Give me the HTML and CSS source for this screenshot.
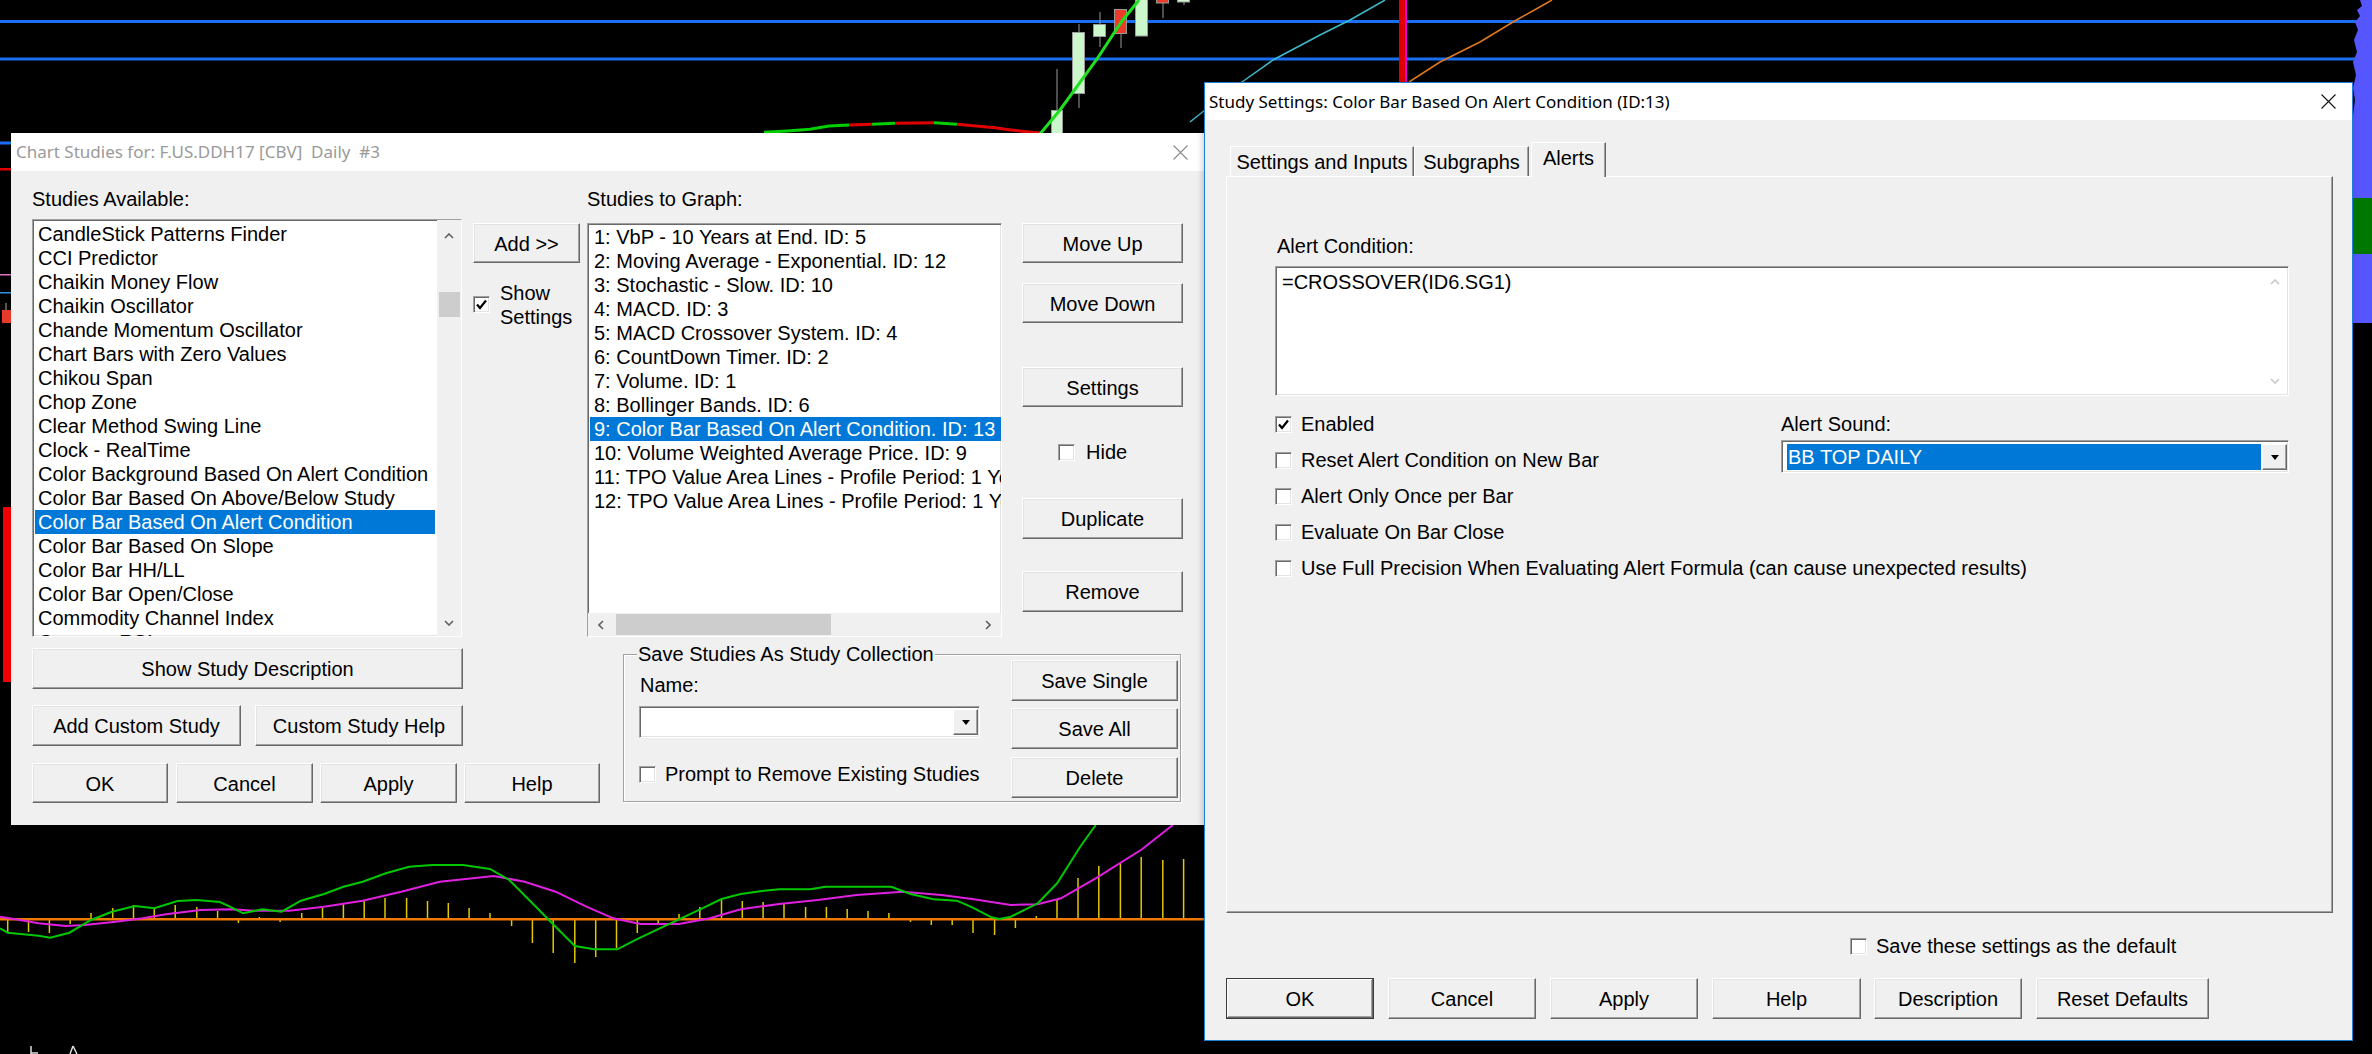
FILE: index.html
```html
<!DOCTYPE html>
<html>
<head>
<meta charset="utf-8">
<title>Chart Studies</title>
<link rel="stylesheet" href="styles.css">
</head>
<body>
<div class="desktop">
  <svg class="chart" width="2372" height="1054" viewBox="0 0 2372 1054">
    <rect width="2372" height="1054" fill="#000"/>
    <rect x="0" y="20" width="2362" height="3" fill="#1a6ef2"/>
    <rect x="0" y="57.5" width="2362" height="3" fill="#1a6ef2"/>
    <rect x="0" y="141.5" width="14" height="3" fill="#1a6ef2"/>
    <!-- left edge pieces -->
    <rect x="0" y="168" width="11" height="2.5" fill="#e00000"/>
    <rect x="0" y="274" width="11" height="1.5" fill="#e070c0"/>
    <rect x="0" y="292" width="11" height="1.5" fill="#3090e0"/>
    <line x1="6" y1="303" x2="6" y2="310" stroke="#aaa"/>
    <rect x="2" y="310" width="9" height="13" fill="#e83a2a"/>
    <rect x="3" y="507" width="8" height="175" fill="#f00000"/>
    <!-- colored MA -->
    <g fill="none" stroke-width="3">
      <polyline stroke="#00d000" points="764,132.3 787,131 810,129.3 829,126 849,125"/>
      <polyline stroke="#e00000" points="849,125 872,124.3"/>
      <polyline stroke="#00d000" points="872,124.3 895,123.3"/>
      <polyline stroke="#e00000" points="895,123.3 934,122.7"/>
      <polyline stroke="#00d000" points="934,122.7 957,124.3"/>
      <polyline stroke="#e00000" points="957,124.3 976,126 995,127.7 1011,130 1026,131.7 1040,133"/>
    </g>
    <!-- candles -->
    <g stroke="#9a9a9a" stroke-width="1">
      <line x1="1057" y1="69" x2="1057" y2="133"/>
      <rect x="1051.5" y="110.5" width="11" height="25" fill="#ccf7cc"/>
      <line x1="1079" y1="24" x2="1079" y2="108"/>
      <rect x="1072.5" y="32.5" width="12" height="61" fill="#ccf7cc"/>
      <line x1="1100" y1="12" x2="1100" y2="47"/>
      <rect x="1093.5" y="24.5" width="12" height="12" fill="#ccf7cc"/>
      <line x1="1121" y1="9" x2="1121" y2="48"/>
      <rect x="1114.5" y="9.5" width="12" height="24" fill="#ee3a28"/>
      <rect x="1135.5" y="-1" width="12" height="37" fill="#ccf7cc"/>
      <line x1="1163" y1="0" x2="1163" y2="18"/>
      <rect x="1156.5" y="-1" width="12" height="4" fill="#ee3a28"/>
      <line x1="1184" y1="0" x2="1184" y2="5"/>
      <rect x="1177.5" y="-1" width="12" height="3" fill="#ccf7cc"/>
    </g>
    <polyline fill="none" stroke="#1ee01e" stroke-width="3" points="1040,134 1060,110 1097,59 1122,21 1139,0"/>
    <!-- top right -->
    <polyline fill="none" stroke="#40b8c8" stroke-width="1.5" points="1190,122 1215,102 1242,82 1273,60 1320,35 1350,20 1385,0"/>
    <rect x="1399" y="0" width="6" height="84" fill="#e00000"/>
    <rect x="1405" y="0" width="2" height="84" fill="#e000e0"/>
    <polyline fill="none" stroke="#e07820" stroke-width="1.5" points="1409,82 1440,62 1480,42 1513,22 1545,4 1552,0"/>
    <!-- right edge -->
    <polygon fill="#5656ff" points="2372,0 2360,0 2362,6 2357,10 2360,16 2355,22 2358,30 2354,40 2357,52 2353,62 2356,75 2353,88 2355,100 2353,115 2353,323 2372,323"/>
    <rect x="2353" y="198" width="19" height="56" fill="#007800"/>
    <!-- lower chart -->
    <path fill="none" stroke="#e0c800" stroke-width="1.5" d="M7.7 919V933M28.5 919V932M49.4 919V933M70.2 919V924M91 919V913M112.7 919V908M133.5 919V905M154.3 919V909M175.2 919V905M196.8 919V907M217.6 919V911M238.4 919V923M259.3 919V917M280.1 919V922M301.7 919V913M322.5 919V908M343.4 919V903M364.2 919V901M385 919V898M406.6 919V898M427.5 919V901M448.3 919V903M469.1 919V908M490 919V913M511.6 919V926M532.4 919V943M553.2 919V953M574.8 919V963M595.7 919V957M616.5 919V948M637.3 919V933M658.2 919V923M679 919V914M699.8 919V907M721.5 919V900M742.3 919V901M763.1 919V902M784 919V904M805.6 919V907M826.4 919V907M847.2 919V909M868 919V911M888.9 919V913M910.5 919V922M931.3 919V925M952.2 919V925M973 919V933M994.6 919V935M1015.4 919V928M1036.3 919V916M1057 919V900M1078 919V878M1098.8 919V866M1120.4 919V863M1141.2 919V857M1162.8 919V860M1183.6 919V859"/>
    <rect x="0" y="918" width="1210" height="2.5" fill="#f07800"/>
    <polyline fill="none" stroke="#e020e0" stroke-width="2" points="0,916.7 15.4,919.3 38.6,923.3 65.6,926 84.9,925 115.7,921.7 142.7,918.3 165.9,914.3 200.6,910 231.5,909.3 254.6,910.7 289.4,910.7 324,906.7 362.7,900.7 401.2,891.7 439.8,881.7 493.8,876 524.7,881.7 555.6,891.7 586.4,906.7 613.4,918.3 640.4,924 679,924 709.9,918.3 740.7,909.3 779.3,904 817.9,900 856.5,895 902.8,891.7 941.4,895 972.2,899 1010.8,905 1037.8,904.3 1061,898.3 1095.7,878.3 1142,849.3 1172.8,825"/>
    <polyline fill="none" stroke="#00c800" stroke-width="2" points="0,928.3 7.7,932.7 23.1,934.3 38.6,935.7 50.2,937.7 69.4,932.7 91,920 111.9,911.7 135,906 154.3,908.3 177.5,901 196.8,900 219.9,902 231.5,907.3 243,913.3 262.3,909.3 281.6,911.7 300.9,900.7 324,894 343.4,886.7 362.7,881.7 385.8,873.3 409,866.7 432,865 463,865 490,869 509.3,880 532.4,903.3 555.6,926.7 574.8,946 594.1,949.3 617.3,949.3 636.6,939.3 659.7,928.3 679,919.3 702.2,908.3 721.5,899 740.7,894 763.9,890.7 779.3,889.3 810.2,889.3 825.6,886.7 891.2,886.7 910.5,894 933.6,899.3 956.8,900.7 972.2,907.3 991.5,917.3 999.2,919 1010.8,916.7 1037.8,903.3 1057.1,883.3 1080.2,846.7 1095.7,825"/>
    <g stroke="#ddd" stroke-width="1.5" fill="none">
      <path d="M31 1046V1054M31 1053H38"/>
      <path d="M70 1054L73 1046M73 1046L77 1054"/>
    </g>
  </svg>

  <!-- Chart Studies window -->
  <div class="win win-studies">
    <div class="titlebar">
      <span class="ttext">Chart Studies for: F.US.DDH17 [CBV]&nbsp; Daily&nbsp; #3</span>
      <svg class="close" viewBox="0 0 15 15"><path d="M0.5 0.5L14.5 14.5M14.5 0.5L0.5 14.5" stroke="#8a8a8a" stroke-width="1.1" fill="none"/></svg>
    </div>
    <div class="sbody">
      <div class="toprow">
        <div class="col-avail">
          <div class="lbl">Studies Available:</div>
          <div class="listbox lb-avail">
            <div class="items">
              <div class="row">CandleStick Patterns Finder</div>
              <div class="row">CCI Predictor</div>
              <div class="row">Chaikin Money Flow</div>
              <div class="row">Chaikin Oscillator</div>
              <div class="row">Chande Momentum Oscillator</div>
              <div class="row">Chart Bars with Zero Values</div>
              <div class="row">Chikou Span</div>
              <div class="row">Chop Zone</div>
              <div class="row">Clear Method Swing Line</div>
              <div class="row">Clock - RealTime</div>
              <div class="row">Color Background Based On Alert Condition</div>
              <div class="row">Color Bar Based On Above/Below Study</div>
              <div class="row sel">Color Bar Based On Alert Condition</div>
              <div class="row">Color Bar Based On Slope</div>
              <div class="row">Color Bar HH/LL</div>
              <div class="row">Color Bar Open/Close</div>
              <div class="row">Commodity Channel Index</div>
              <div class="row">Connors RSI</div>
            </div>
            <div class="vscroll">
              <div class="sb-up"><svg class="chev" viewBox="0 0 10 6"><polyline points="1,5 5,1 9,5"/></svg></div>
              <div class="vthumb"></div>
              <div class="sb-fill"></div>
              <div class="sb-down"><svg class="chev" viewBox="0 0 10 6"><polyline points="1,1 5,5 9,1"/></svg></div>
            </div>
          </div>
        </div>
        <div class="col-mid">
          <div class="btn btn-add">Add &gt;&gt;</div>
          <div class="showset">
            <span class="cb checked"><svg viewBox="0 0 15 15"><polyline points="3,7.5 6,11 12,3.5"/></svg></span>
            <span class="txt">Show<br>Settings</span>
          </div>
        </div>
        <div class="col-graph">
          <div class="lbl">Studies to Graph:</div>
          <div class="listbox lb-graph">
            <div class="items">
              <div class="row">1: VbP - 10 Years at End. ID: 5</div>
              <div class="row">2: Moving Average - Exponential. ID: 12</div>
              <div class="row">3: Stochastic - Slow. ID: 10</div>
              <div class="row">4: MACD. ID: 3</div>
              <div class="row">5: MACD Crossover System. ID: 4</div>
              <div class="row">6: CountDown Timer. ID: 2</div>
              <div class="row">7: Volume. ID: 1</div>
              <div class="row">8: Bollinger Bands. ID: 6</div>
              <div class="row sel">9: Color Bar Based On Alert Condition. ID: 13</div>
              <div class="row">10: Volume Weighted Average Price. ID: 9</div>
              <div class="row">11: TPO Value Area Lines - Profile Period: 1 Year</div>
              <div class="row">12: TPO Value Area Lines - Profile Period: 1 Year</div>
            </div>
            <div class="hscroll">
              <div class="sb-left"><svg class="chev-h" viewBox="0 0 6 10"><polyline points="5,1 1,5 5,9"/></svg></div>
              <div class="hthumb"></div>
              <div class="sb-fill"></div>
              <div class="sb-right"><svg class="chev-h" viewBox="0 0 6 10"><polyline points="1,1 5,5 1,9"/></svg></div>
            </div>
          </div>
        </div>
        <div class="col-btns">
          <div class="btn b-up">Move Up</div>
          <div class="btn b-down">Move Down</div>
          <div class="btn b-set">Settings</div>
          <div class="hide-row"><span class="cb"></span><span class="txt">Hide</span></div>
          <div class="btn b-dup">Duplicate</div>
          <div class="btn b-rem">Remove</div>
        </div>
      </div>
      <div class="botrow">
        <div class="botleft">
          <div class="btn btn-desc">Show Study Description</div>
          <div class="brow brow1">
            <div class="btn w209">Add Custom Study</div>
            <div class="btn w208">Custom Study Help</div>
          </div>
          <div class="brow brow2">
            <div class="btn w136">OK</div>
            <div class="btn w137 ml8">Cancel</div>
            <div class="btn w137 ml7">Apply</div>
            <div class="btn w136 ml7">Help</div>
          </div>
        </div>
        <div class="group">
          <span class="legend">Save Studies As Study Collection</span>
          <div class="g-left">
            <div class="lbl g-name">Name:</div>
            <div class="combo g-combo">
              <span class="val"></span>
              <span class="drop"><svg viewBox="0 0 8 5"><polygon points="0,0 8,0 4,5"/></svg></span>
            </div>
            <div class="g-prompt"><span class="cb"></span><span class="txt">Prompt to Remove Existing Studies</span></div>
          </div>
          <div class="g-right">
            <div class="btn g-b1">Save Single</div>
            <div class="btn g-b2">Save All</div>
            <div class="btn g-b3">Delete</div>
          </div>
        </div>
      </div>
    </div>
  </div>

  <!-- Study Settings window -->
  <div class="win win-settings">
    <div class="titlebar">
      <span class="ttext">Study Settings: Color Bar Based On Alert Condition (ID:13)</span>
      <svg class="close" viewBox="0 0 15 15"><path d="M0.5 0.5L14.5 14.5M14.5 0.5L0.5 14.5" stroke="#111" stroke-width="1.1" fill="none"/></svg>
    </div>
    <div class="tbody">
      <div class="tabs">
        <div class="tab t1">Settings and Inputs</div>
        <div class="tab t2">Subgraphs</div>
        <div class="tab t3 active">Alerts</div>
      </div>
      <div class="panel">
        <div class="lbl p-lbl">Alert Condition:</div>
        <div class="tarea">
          <div class="tval">=CROSSOVER(ID6.SG1)</div>
          <div class="tscroll">
            <svg class="chev faint" viewBox="0 0 10 6"><polyline points="1,5 5,1 9,5"/></svg>
            <svg class="chev faint" viewBox="0 0 10 6"><polyline points="1,1 5,5 9,1"/></svg>
          </div>
        </div>
        <div class="opts">
          <div class="opt-col">
            <div class="opt"><span class="cb checked"><svg viewBox="0 0 15 15"><polyline points="3,7.5 6,11 12,3.5"/></svg></span><span class="txt">Enabled</span></div>
            <div class="opt"><span class="cb"></span><span class="txt">Reset Alert Condition on New Bar</span></div>
            <div class="opt"><span class="cb"></span><span class="txt">Alert Only Once per Bar</span></div>
            <div class="opt"><span class="cb"></span><span class="txt">Evaluate On Bar Close</span></div>
            <div class="opt"><span class="cb"></span><span class="txt">Use Full Precision When Evaluating Alert Formula (can cause unexpected results)</span></div>
          </div>
          <div class="snd-col">
            <div class="lbl">Alert Sound:</div>
            <div class="combo snd-combo">
              <span class="val selval">BB TOP DAILY</span>
              <span class="drop"><svg viewBox="0 0 8 5"><polygon points="0,0 8,0 4,5"/></svg></span>
            </div>
          </div>
        </div>
      </div>
      <div class="save-def"><span class="cb"></span><span class="txt">Save these settings as the default</span></div>
      <div class="dlg-btns">
        <div class="btn defbtn w148">OK</div>
        <div class="btn w148 ml14">Cancel</div>
        <div class="btn w148 ml14">Apply</div>
        <div class="btn w149 ml14">Help</div>
        <div class="btn w148 ml13">Description</div>
        <div class="btn w173 ml14">Reset Defaults</div>
      </div>
    </div>
  </div>
</div>
</body>
</html>
```
FILE: styles.css
```css
* { box-sizing: border-box; }
html, body { margin: 0; padding: 0; background: #000; }
body { width: 2372px; height: 1054px; overflow: hidden; }

.desktop {
  position: relative;
  width: 2372px;
  height: 1054px;
  overflow: hidden;
  font-family: "Liberation Sans", Arial, sans-serif;
  font-size: 20px;
  line-height: 24px;
  color: #000;
}
.chart { position: absolute; left: 0; top: 0; display: block; }

/* windows */
.win { position: absolute; background: #f0f0f0; display: flex; flex-direction: column; }
.win-studies { left: 11px; top: 133px; width: 1193px; height: 692px; }
.win-settings {
  left: 1204px; top: 82px; width: 1149px; height: 959px;
  border: 1px solid #1b7fd6;
  box-shadow: -2px 0 6px rgba(0,0,0,0.18);
}
.titlebar {
  flex: none;
  height: 38px;
  background: #fff;
  display: flex;
  align-items: center;
  justify-content: space-between;
  font-family: "Noto Sans", "Open Sans", sans-serif;
  font-size: 17px;
  white-space: nowrap;
}
.win-studies .titlebar { padding: 0 16px 0 5px; color: #9a9a9a; }
.win-settings .titlebar { height: 37px; padding: 0 16px 0 4px; color: #000; }
.close { width: 15px; height: 15px; display: block; flex: none; }

/* common controls */
.lbl { height: 24px; white-space: nowrap; }
.txt { white-space: nowrap; }
.btn {
  display: flex;
  align-items: center;
  justify-content: center;
  background: #f0f0f0;
  border: 1px solid;
  border-color: #ffffff #696969 #696969 #ffffff;
  box-shadow: inset -1px -1px 0 #a0a0a0, inset 1px 1px 0 #e3e3e3;
  white-space: nowrap;
  flex: none;
  padding-top: 1px;
}
.defbtn { border-color: #3c3c3c; box-shadow: inset -1px -1px 0 #696969, inset 1px 1px 0 #fff, inset -2px -2px 0 #a0a0a0; }
.cb {
  display: inline-block;
  flex: none;
  width: 17px;
  height: 17px;
  background: #fff;
  border: 1px solid;
  border-color: #a0a0a0 #fff #fff #a0a0a0;
  box-shadow: inset 1px 1px 0 #696969, inset -1px -1px 0 #e3e3e3;
  position: relative;
}
.cb svg { display: block; width: 15px; height: 15px; }
.cb svg polyline { fill: none; stroke: #000; stroke-width: 2.2; }
.sunken {
  border: 1px solid;
}
.listbox, .combo, .tarea {
  background: #fff;
  border: 1px solid;
  border-color: #a0a0a0 #fff #fff #a0a0a0;
  box-shadow: inset 1px 1px 0 #696969, inset -1px -1px 0 #e3e3e3;
}
.listbox { display: flex; overflow: hidden; }
.items { flex: 1; min-width: 0; overflow: hidden; }
.row { height: 24px; white-space: nowrap; overflow: hidden; }
.row.sel { background: #0078d7; color: #fff; }
.chev { width: 10px; height: 6px; display: block; }
.chev polyline, .chev-h polyline { fill: none; stroke: #606060; stroke-width: 1.6; }
.chev-h { width: 6px; height: 10px; display: block; }
.chev.faint polyline { stroke: #c8c8c8; }

/* chart studies window */
.sbody { padding-left: 21px; display: flex; flex-direction: column; }
.toprow { display: flex; align-items: flex-start; margin-top: 16px; }
.col-avail { width: 430px; flex: none; }
.lb-avail { margin-top: 8px; height: 418px; }
.lb-avail .items { padding: 2px 2px 0 2px; }
.lb-avail .row { padding-left: 3px; }
.vscroll { width: 24px; flex: none; background: #f0f0f0; display: flex; flex-direction: column; align-items: center; }
.sb-up { height: 32px; display: flex; align-items: center; justify-content: center; width: 100%; }
.sb-down { height: 26px; display: flex; align-items: center; justify-content: center; width: 100%; }
.vthumb { margin-top: 40px; width: 21px; height: 25px; background: #cdcdcd; }
.sb-fill { flex: 1; }

.col-mid { margin-left: 11px; width: 107px; flex: none; }
.btn-add { margin-top: 36px; height: 40px; width: 107px; }
.showset { margin-top: 18px; display: flex; align-items: flex-start; }
.showset .cb { margin-top: 15px; }
.showset .txt { margin-left: 10px; }

.col-graph { margin-left: 7px; width: 415px; flex: none; }
.lb-graph { margin-top: 12px; height: 414px; flex-direction: column; }
.lb-graph .items { padding: 1px 0 0 2px; }
.lb-graph .row { padding-left: 4px; }
.hscroll { height: 23px; flex: none; background: #f0f0f0; display: flex; align-items: center; }
.sb-left, .sb-right { width: 26px; height: 23px; display: flex; align-items: center; justify-content: center; }
.hthumb { margin-left: 2px; width: 215px; height: 21px; background: #cdcdcd; }

.col-btns { margin-left: 20px; width: 161px; flex: none; display: flex; flex-direction: column; }
.col-btns .btn { width: 161px; }
.b-up { margin-top: 36px; height: 40px; }
.b-down { margin-top: 20px; height: 40px; }
.b-set { margin-top: 44px; height: 40px; }
.hide-row { margin-top: 33px; height: 24px; padding-left: 36px; display: flex; align-items: center; }
.hide-row .txt { margin-left: 11px; }
.b-dup { margin-top: 34px; height: 41px; }
.b-rem { margin-top: 32px; height: 41px; }

.botrow { display: flex; align-items: flex-start; margin-top: 11px; }
.botleft { width: 568px; flex: none; display: flex; flex-direction: column; }
.btn-desc { width: 431px; height: 41px; }
.brow { display: flex; }
.brow1 { margin-top: 16px; }
.brow1 .btn { height: 41px; }
.brow1 .w208 { margin-left: 14px; }
.brow2 { margin-top: 17px; }
.brow2 .btn { height: 40px; }
.w136 { width: 136px; } .w137 { width: 137px; } .w148 { width: 148px; } .w149 { width: 149px; }
.w173 { width: 173px; } .w208 { width: 208px; } .w209 { width: 209px; }
.ml7 { margin-left: 7px; } .ml8 { margin-left: 8px; } .ml13 { margin-left: 13px; } .ml14 { margin-left: 14px; }

.group {
  position: relative;
  margin-left: 23px;
  margin-top: 6px;
  width: 558px;
  height: 148px;
  border: 1px solid #a0a0a0;
  box-shadow: inset 1px 1px 0 #fff, 1px 1px 0 #fff;
  display: flex;
  align-items: flex-start;
}
.legend { position: absolute; left: 13px; top: -13px; background: #f0f0f0; padding: 0 1px; line-height: 24px; white-space: nowrap; }
.g-left { margin-left: 15px; width: 341px; flex: none; display: flex; flex-direction: column; }
.g-name { margin-top: 18px; padding-left: 1px; }
.combo { display: flex; padding: 2px 1px 2px 2px; }
.combo .val { flex: 1; min-width: 0; }
.combo .drop {
  width: 25px; flex: none;
  display: flex; align-items: center; justify-content: center;
  background: #f0f0f0;
  border: 1px solid;
  border-color: #fff #696969 #696969 #fff;
  box-shadow: inset -1px -1px 0 #a0a0a0;
}
.combo .drop svg { width: 8px; height: 5px; display: block; }
.g-combo { margin-top: 9px; height: 32px; }
.g-prompt { margin-top: 24px; height: 24px; display: flex; align-items: center; }
.g-prompt .txt { margin-left: 9px; }
.g-right { margin-left: 31px; width: 167px; flex: none; display: flex; flex-direction: column; }
.g-right .btn { width: 167px; height: 41px; }
.g-b1 { margin-top: 5px; }
.g-b2 { margin-top: 7px; }
.g-b3 { margin-top: 8px; }

/* study settings window */
.tbody { padding-left: 21px; display: flex; flex-direction: column; }
.tabs { display: flex; align-items: flex-end; height: 34px; margin-top: 22px; margin-left: 4px; position: relative; z-index: 1; }
.tab {
  height: 30px;
  display: flex; align-items: center; justify-content: center;
  background: #f0f0f0;
  border-top: 1px solid #fff;
  border-left: 1px solid #fff;
  border-right: 1px solid #696969;
  box-shadow: inset -1px 0 0 #a0a0a0;
  white-space: nowrap;
  flex: none;
}
.t1 { width: 184px; }
.t2 { width: 115px; }
.t3 { width: 75px; }
.tab.active { height: 35px; margin-left: 2px; margin-bottom: -1px; padding-bottom: 4px; }
.panel {
  width: 1107px;
  height: 737px;
  border: 1px solid;
  border-color: #fff #696969 #696969 #fff;
  box-shadow: inset -1px -1px 0 #a0a0a0;
  padding: 57px 0 0 48px;
  flex: none;
}
.p-lbl { margin-left: 2px; }
.tarea { margin-top: 8px; width: 1014px; height: 130px; display: flex; padding: 3px 1px 1px 6px; }
.tval { flex: 1; white-space: nowrap; }
.tscroll { width: 24px; flex: none; display: flex; flex-direction: column; align-items: center; justify-content: space-between; padding: 9px 0 10px; }
.opts { margin-top: 16px; display: flex; }
.opt-col { width: 506px; flex: none; }
.opt { height: 24px; display: flex; align-items: center; margin-bottom: 12px; }
.opt .txt { margin-left: 9px; }
.snd-col { width: 508px; flex: none; }
.snd-combo { margin-top: 4px; height: 33px; padding: 3px 1px 2px 5px; }
.selval { background: #0078d7; color: #fff; padding-left: 1px; line-height: 26px; margin-right: 1px; }
.save-def { margin-top: 21px; margin-left: 624px; height: 24px; display: flex; align-items: center; }
.save-def .txt { margin-left: 9px; }
.dlg-btns { margin-top: 20px; display: flex; }
.dlg-btns .btn { height: 41px; }
```
